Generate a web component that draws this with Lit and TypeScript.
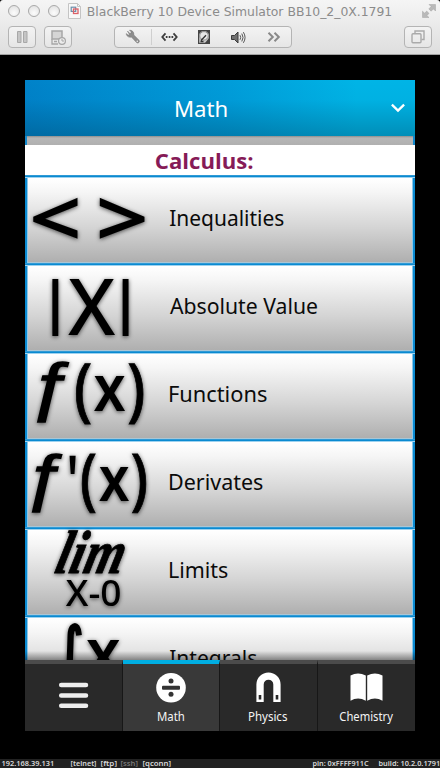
import { LitElement, html, svg, css } from "lit";
import { customElement } from "lit/decorators.js";

const SLATE = '"Noto Sans", "Open Sans", sans-serif';
const OPEN = '"Open Sans", "Noto Sans", sans-serif';
const SANS = '"Liberation Sans", sans-serif';

const ctx = document.createElement("canvas").getContext("2d")!;

function ink(text: string, font: string) {
  ctx.font = font;
  const m = ctx.measureText(text);
  return {
    left: -m.actualBoundingBoxLeft,
    width: m.actualBoundingBoxRight + m.actualBoundingBoxLeft,
    top: -m.actualBoundingBoxAscent,
    height: m.actualBoundingBoxAscent + m.actualBoundingBoxDescent,
  };
}

/** One line of text condensed or widened to an exact ink width. */
function label(text: string, width: number, size: number, height: number, baseline: number, family = SLATE, weight = 400) {
  const b = ink(text, `${weight} ${size * 10}px ${family}`);
  const sx = width / (b.width / 10);
  return html`<svg class="label" width=${width} height=${height}>
    <text transform="translate(${(-b.left / 10) * sx} ${baseline}) scale(${sx} 1)"
      font-family=${family} font-size=${size} font-weight=${weight}>${text}</text></svg>`;
}

/** A math symbol set so that its ink, outline included, fills the box x0..x1, y0..y1. */
function sym(ch: string, x0: number, x1: number, y0: number, y1: number, family = SLATE, weight = 400, style = "normal", outline = 0) {
  const b = ink(ch, `${style} ${weight} 100px ${family}`);
  const sx = (x1 - x0 - outline) / b.width;
  const sy = (y1 - y0 - outline) / b.height;
  return svg`<text transform="translate(${x0 + outline / 2 - b.left * sx} ${y0 + outline / 2 - b.top * sy}) scale(${sx} ${sy})"
    font-family=${family} font-size="100" font-weight=${weight} font-style=${style}
    stroke="#000" stroke-width=${outline} vector-effect="non-scaling-stroke">${ch}</text>`;
}

const ROWS = [
  { name: "Inequalities", w: 113.5, art: () => [sym("<", 7.7, 53, 23, 64.3, SLATE, 600), sym(">", 74.3, 120, 23, 64.3, SLATE, 600)] },
  { name: "Absolute Value", w: 147, art: () => [sym("|", 26.7, 34, 15.7, 72), sym("X", 43, 90.3, 15.7, 72, SLATE, 500), sym("|", 97, 104.3, 15.7, 72)] },
  { name: "Functions", w: 96.5, art: () => [
    sym("ƒ", 11.7, 45, 10.7, 73, SANS, 400, "normal", 1.6), sym("(", 51, 66.3, 11.7, 73, SLATE, 500, "normal", 0.8),
    sym("x", 69, 100, 24.7, 60, SLATE, 600), sym(")", 103.7, 119, 11.7, 73, SLATE, 500, "normal", 0.8)] },
  { name: "Derivates", w: 92.5, art: () => [
    sym("ƒ", 6.7, 38.3, 15, 74.3, SANS, 400, "normal", 1.6), sym("'", 44.3, 51, 16, 34.3, SLATE, 500),
    sym("(", 56.7, 71, 15, 74.3, SLATE, 500, "normal", 0.8), sym("x", 74.3, 104, 27.7, 62, SLATE, 600), sym(")", 107, 121.7, 15, 74.3, SLATE, 500, "normal", 0.8)] },
  { name: "Limits", w: 57.5, art: () => [
    svg`<g transform="translate(66 25) skewX(-14) translate(-66 -25)">${sym("lim", 34, 99, 3, 46, '"Liberation Serif", serif', 700, "italic", 0.8)}</g>`,
    sym("X-0", 40.7, 95, 53, 79.7, SLATE, 500)] },
  { name: "Integrals", w: 86.5, art: () => [sym("∫", 32, 57, 8.3, 84, '"DejaVu Sans"', 400, "normal", 2.2), sym("x", 61.7, 95, 25, 61, SLATE, 600)] },
];

@customElement("app-root")
export class AppRoot extends LitElement {
  static styles = css`
    :host { display: flex; flex-direction: column; width: 440px; height: 768px; background: #000; overflow: hidden; }
    svg { display: block; overflow: visible; flex: none; }
    .label { fill: currentColor; }
    .chrome { box-sizing: border-box; height: 55px; background: linear-gradient(#f5f5f5, #dedede); border-bottom: 1px solid #a2a2a2; border-radius: 3px 3px 0 0; }
    .title { display: flex; align-items: flex-start; height: 26px; padding-left: 8px; color: #8b8b8b; }
    .dots { display: flex; gap: 8px; padding-top: 5px; margin-right: 8px; }
    .dot { box-sizing: border-box; width: 12px; height: 12px; border-radius: 50%; border: 1px solid #a9a9a9; background: radial-gradient(circle at 50% 70%, #fcfcfc, #dedede); }
    .doc { margin: 3px 6.5px 0 0; }
    .grow { flex: 1; }
    .full { margin: 4px 4px 0 0; }
    .tools { display: flex; padding: 0 8px; }
    .btn { box-sizing: border-box; display: flex; align-items: center; justify-content: center; width: 28px; height: 22px; border: 1px solid #b4b4b4; border-radius: 4px; background: linear-gradient(#f3f3f3, #e6e6e6); }
    .btn.second { margin-left: 8px; }
    .seg { width: 178px; margin-left: 42px; justify-content: flex-start; }
    .cell { display: flex; align-items: center; justify-content: center; width: 35px; height: 20px; }
    .cell.first { width: 36px; height: 16px; border-right: 1px solid #cfcfcf; }
    .device { display: flex; flex-direction: column; width: 390px; height: 651px; margin: 25px 0 0 25px; }
    .bar { display: flex; align-items: flex-start; height: 56px; flex: none; color: #fff;
      background: linear-gradient(rgba(0,40,60,0), rgba(0,40,60,0.02) 35%, rgba(0,40,60,0.27)), linear-gradient(90deg, #0082c9, #009bd9 50%, #00b4e6 85%); }
    .bar .label { margin-left: 151px; }
    .chev { margin: 23px 10px 0 auto; }
    .list { display: flex; flex-direction: column; height: 524px; overflow: hidden; background: #fff; position: relative; }
    .strip { box-sizing: border-box; height: 9px; flex: none; border: solid #1289cd; border-width: 0 2px; background: linear-gradient(#8d8d8d, #b6b6b6 2px, #b0b0b0); }
    .head { box-sizing: border-box; height: 30px; flex: none; padding-left: 130.5px; color: #861b57; }
    .row { box-sizing: border-box; display: flex; height: 88px; flex: none; color: #0b0b0b;
      background: linear-gradient(#2f9ad6 0 1px, #0a8ad1 1px 2px, #9ed2ef 2px 3px, transparent 3px),
        linear-gradient(90deg, #0a8ad1 0 2px, #8dc7e8 2px 3px, transparent 3px 387px, #8dc7e8 387px 388px, #0a8ad1 388px),
        linear-gradient(#fff 4%, #f5f5f5 20%, #d4d4d4 60%, #afafaf 87px, #a9c6d6 87px); }
    .art { margin-right: 0.5px; filter: drop-shadow(0 1px 2px rgba(0,0,0,0.65)); fill: #000; }
    .fade { position: absolute; left: 0; right: 0; bottom: 0; height: 9px; background: linear-gradient(transparent, rgba(0,0,0,0.4)); }
    .tabs { display: grid; grid-template-columns: 97.5px 97.5px 97.5px 97.5px; height: 71px; flex: none; }
    .tab { box-sizing: border-box; display: flex; flex-direction: column; align-items: center; border-top: 4px solid #4b4b4b; border-right: 1px solid #171717; background: #292929; color: #f4f4f4; }
    .tab:last-child { border-right: 0; }
    .tab.on { border-top-color: #00aee2; background: #393939; }
    .status { display: flex; height: 9px; margin-top: 28px; padding: 0 1px 0 2px; background: #222; color: #d8d8d8; }
    .status .label { margin-right: 4.8px; }
    .ip { margin-right: 13.5px; }
    .off { color: #777; }
    .pin { margin-right: 6px; }
    .status .end .label { margin-right: 0; }
  `;

  private chrome() {
    return html`<div class="chrome">
      <div class="title">
        <div class="dots"><div class="dot"></div><div class="dot"></div><div class="dot"></div></div>
        <svg class="doc" width="13" height="16" fill="none"><path d="M.5 .5h9l3 3v12h-12z" fill="#f8f8f8" stroke="#c4c4c4"/><path d="M9.5 .5v3h3" stroke="#c4c4c4"/><rect x="3.2" y="4.2" width="4.5" height="4.2" stroke="#6b8ea9" stroke-width="1.2"/><rect x="5.5" y="6" width="4.5" height="4.5" stroke="#dc6067" stroke-width="1.3"/></svg>
        ${label("BlackBerry 10 Device Simulator BB10_2_0X.1791", 303.5, 13, 22, 16, '"DejaVu Sans"')}
        <span class="grow"></span>
        <svg class="full" width="14" height="14" fill="#b9b9b9"><path d="M7 .5h6.5v6.5l-2.1-2.1-2.3 2.3-2.3-2.3 2.3-2.3zM.5 7.2l2.1 2 2.1-2.1 2.3 2.3-2.1 2.1 2.1 2H.5z" stroke="#a4a4a4" stroke-width=".5"/></svg>
      </div>
      <div class="tools">
        <div class="btn"><svg width="11" height="12" fill="#c5c5c5" stroke="#a8a8a8"><path d="M.5 .5h3.5v11H.5zM6.5 .5h3.5v11H6.5z"/></svg></div>
        <div class="btn second"><svg width="15" height="15" fill="none" stroke="#a6a6a6"><path d="M1 1h10v8H1z" fill="#d5d5d5" stroke-width="1.5"/><path d="M1 9v5h6M3 11.5h3" stroke-width="1.3"/><circle cx="11" cy="11" r="3.4" fill="#ececec" stroke-width="1.2"/><path d="M11 9v2h2"/></svg></div>
        <div class="btn seg">
          <div class="cell first"><svg width="14" height="14"><path d="M1.5 1.1 4 3.6l1-.1.1-1.7L3.5.2C6 0 8.3 2 7.8 5l5.2 5.2c1.3 1.5-.8 3.7-2.4 2.4L5.4 7C2.700 8 .3 5.8.2 3.600l1.900 1.500 1.500-.3z" fill="#8d8d8d" stroke="#6e6e6e" stroke-width=".5"/><circle cx="11.300" cy="11.300" r=".8" fill="#eee"/></svg></div>
          <div class="cell"><svg width="17" height="10" fill="none" stroke="#3c3c3c" stroke-width="1.8"><path d="M4.500 1.300 1.300 5l3.200 3.700M12.500 1.300 15.700 5l-3.200 3.700"/><path d="M4.800 5h1.700M7.700 5h1.700M10.500 5h1.700"/></svg></div>
          <div class="cell"><svg width="12" height="14"><path d="M.6 .6h10.800v12.800H.6z" fill="#c9c9c9" stroke="#444" stroke-width="1.200"/><path d="M1 1h3L1 4zM11 1H8l3 3zM11 13V8l-4 5z" fill="#444"/><circle cx="6" cy="5.800" r="4.200" fill="#e6e6e6" stroke="#666" stroke-width=".6"/><path d="M3 10.500 8 5.200M2.500 11.500h3" stroke="#333" stroke-width="1.300"/></svg></div>
          <div class="cell"><svg width="15" height="13"><path d="M.5 4.500h3L7 1v11L3.500 8.500h-3z" fill="#707070" stroke="#3b3b3b"/><path d="M9 4.200q1.400 2.300 0 4.600M10.800 2.600q2.500 3.900 0 7.800M12.400 1.200q3.300 5.300 0 10.600" fill="none" stroke="#555"/></svg></div>
          <div class="cell"><svg width="14" height="10" fill="none" stroke="#898989" stroke-width="2"><path d="m1.500 .7 4.300 4.300-4.300 4.300M7.500 .7l4.300 4.300-4.300 4.300"/></svg></div>
        </div>
        <span class="grow"></span>
        <div class="btn"><svg width="14" height="14" fill="none" stroke="#aaa" stroke-width="1.400"><path d="M4 3.500V1h9v8.500h-2.500"/><rect x="1" y="3.800" width="9" height="9" rx="1"/></svg></div>
      </div>
    </div>`;
  }

  render() {
    return html`${this.chrome()}
      <div class="device">
        <div class="bar">${label("Math", 50.5, 21.5, 56, 37)}
          <svg class="chev" width="14" height="10" fill="none" stroke="#fff" stroke-width="2.300"><path d="m.9 1.600 6.100 6 6.100-6"/></svg>
        </div>
        <div class="list">
          <div class="strip"></div>
          <div class="head">${label("Calculus:", 96.500, 21.500, 30, 24, OPEN, 700)}</div>
          ${ROWS.map(r => html`<div class="row"><svg class="art" width="144" height="88">${r.art()}</svg>${label(r.name, r.w, 21.500, 88, 51)}</div>`)}
          <div class="fade"></div>
        </div>
        <div class="tabs">
          <div class="tab"><svg width="98" height="67" fill="none" stroke="#eee" stroke-width="4.500" stroke-linecap="round"><path d="M37.200 21h24.800M37.200 31.400h24.800M37.200 41.700h24.800"/></svg></div>
          <div class="tab on"><svg width="30" height="46"><circle cx="15" cy="23.700" r="14.800" fill="#fff"/><rect x="6" y="21.800" width="18" height="4" rx="1" fill="#333"/><circle cx="15" cy="17" r="2.500" fill="#333"/><circle cx="15" cy="30.200" r="2.500" fill="#333"/></svg>${label("Math", 26, 11.800, 20, 11)}</div>
          <div class="tab"><svg width="25" height="46"><path d="M.4 37.900V20.500a12.100 12.100 0 0 1 24.200 0v17.400h-7.300V20.500a4.800 4.800 0 0 0-9.600 0v17.400z" fill="#fff"/><path d="M2.700 31h2.600v4.600H2.700zM19.700 31h2.600v4.600h-2.600z" fill="#292929"/></svg>${label("Physics", 38, 11.800, 20, 11)}</div>
          <div class="tab"><svg width="33" height="46" fill="#fff"><path d="M.5 11.500Q8 7.500 15.800 11.500V36.700Q8 32.500.5 36.700zM17.200 11.500Q25 7.500 32.500 11.500V36.700Q25 32.500 17.200 36.700z"/></svg>${label("Chemistry", 53, 11.800, 20, 11)}</div>
        </div>
      </div>
      <div class="status">
        <div class="ip">${label("192.168.39.131", 51, 7.800, 9, 7, SLATE, 600)}</div>
        ${label("[telnet]", 25, 7.800, 9, 7, SLATE, 600)}
        ${label("[ftp]", 15.500, 7.800, 9, 7, SLATE, 600)}
        <div class="off">${label("[ssh]", 16.500, 7.800, 9, 7, SLATE, 600)}</div>
        ${label("[qconn]", 27.500, 7.800, 9, 7, SLATE, 600)}
        <span class="grow"></span>
        <div class="pin">${label("pin: 0xFFFF911C", 55.500, 7.800, 9, 7, SLATE, 600)}</div>
        <div class="end">${label("build: 10.2.0.1791", 60, 7.800, 9, 7, SLATE, 600)}</div>
      </div>`;
  }
}
